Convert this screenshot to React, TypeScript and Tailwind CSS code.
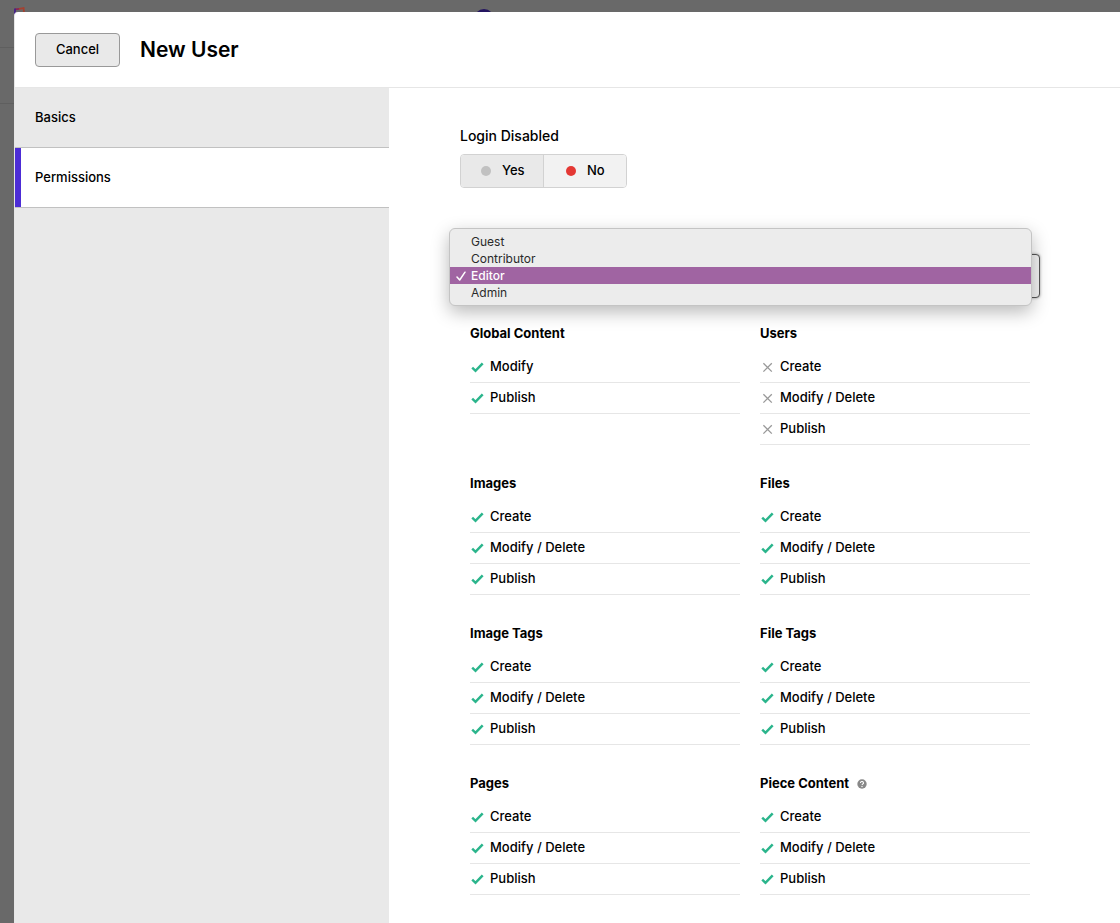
import React from 'react'

interface Permission {
  label: string
  allowed: boolean
}

interface PermissionGroup {
  title: string
  hasHelp?: boolean
  permissions: Permission[]
}

const fullAccess: Permission[] = [
  { label: 'Create', allowed: true },
  { label: 'Modify / Delete', allowed: true },
  { label: 'Publish', allowed: true }
]

const noAccess: Permission[] = fullAccess.map((p) => ({ ...p, allowed: false }))

const groups: PermissionGroup[] = [
  {
    title: 'Global Content',
    permissions: [
      { label: 'Modify', allowed: true },
      { label: 'Publish', allowed: true }
    ]
  },
  { title: 'Users', permissions: noAccess },
  { title: 'Images', permissions: fullAccess },
  { title: 'Files', permissions: fullAccess },
  { title: 'Image Tags', permissions: fullAccess },
  { title: 'File Tags', permissions: fullAccess },
  { title: 'Pages', permissions: fullAccess },
  { title: 'Piece Content', hasHelp: true, permissions: fullAccess }
]

const roles = ['Guest', 'Contributor', 'Editor', 'Admin']

const AllowedIcon = () => (
  <svg viewBox="0 0 15 15" className="h-[15px] w-[15px] shrink-0" fill="none" aria-hidden="true">
    <path d="M2.2 7.7 5.5 10.8 12.7 3.4" stroke="#2bb58c" strokeWidth="2.5" />
  </svg>
)

const DeniedIcon = () => (
  <svg viewBox="0 0 15 15" className="h-[15px] w-[15px] shrink-0" fill="none" aria-hidden="true">
    <path d="M3.4 3.2 11.8 11.6M11.8 3.2 3.4 11.6" stroke="#999" strokeWidth="1.3" />
  </svg>
)

const HelpIcon = () => (
  <svg viewBox="0 0 10 10" className="h-[10px] w-[10px]" fill="none" aria-hidden="true">
    <circle cx="5" cy="5" r="4.7" fill="#888" />
    <path d="M3.5 4a1.5 1.4 0 1 1 2.2 1.1c-.5.3-.7.5-.7.9" stroke="#fff" strokeWidth="1.1" />
    <circle cx="5" cy="7.5" r=".7" fill="#fff" />
  </svg>
)

// Admin bar and page that stay visible behind the modal
const Backdrop = () => (
  <div className="absolute inset-0 overflow-hidden bg-[#696969]" aria-hidden="true">
    <div className="flex h-12 border-b border-[#5f5f5f] pl-3">
      <svg viewBox="0 0 16 16" className="mt-1.5 h-4 w-4" fill="none">
        <path d="M12.4 12 11.6 2.1 7 2.8" stroke="#a5402f" strokeWidth="1.8" />
        <path d="M7 2.8 3 3.4" stroke="#8a2352" strokeWidth="1.8" />
        <path d="M3 2.6V14" stroke="#45208a" strokeWidth="1.8" />
      </svg>
      <span className="mt-[9px] ml-[446px] h-5 w-5 rounded-full bg-[#241560]" />
    </div>
    <div className="h-14 border-b border-[#5f5f5f]" />
  </div>
)

interface SidebarTabProps {
  label: string
  active?: boolean
}

const SidebarTab: React.FC<SidebarTabProps> = ({ label, active }) => (
  <button
    type="button"
    role="tab"
    aria-selected={!!active}
    className={`relative h-15 w-full border-b border-[#c1c1c1] pl-5 text-left text-[13px] font-medium ${
      active ? 'bg-white' : ''
    }`}
  >
    {active && <span className="absolute inset-y-0 left-0 w-1.5 bg-[#4c2cd6]" />}
    {label}
  </button>
)

const LoginToggle = () => (
  <fieldset>
    <legend className="text-sm leading-5 font-medium">Login Disabled</legend>
    <div className="mt-2 inline-flex h-[34px] overflow-hidden rounded border border-[#d2d2d2] text-[13px] font-medium">
      <label className="flex w-[83px] items-center gap-[11px] border-r border-[#d2d2d2] bg-[#e9e9e9] pl-5">
        <input
          type="radio"
          name="disabled"
          value="yes"
          className="h-2.5 w-2.5 appearance-none rounded-full bg-[#c1c1c1] checked:bg-green-500"
        />
        Yes
      </label>
      <label className="flex w-[82px] items-center gap-[11px] bg-[#f2f2f2] pl-[22px]">
        <input
          type="radio"
          name="disabled"
          value="no"
          defaultChecked
          className="h-2.5 w-2.5 appearance-none rounded-full bg-[#c1c1c1] checked:bg-[#e43834]"
        />
        No
      </label>
    </div>
  </fieldset>
)

const RoleSelect = () => (
  <div className="relative mt-[66px]">
    <select
      aria-label="Role"
      defaultValue="Editor"
      className="block h-11 w-full appearance-none rounded border border-[#555] bg-[#f2f2f2] px-5 text-[13px] shadow-[0_0_3px_rgba(0,0,0,0.4)]"
    >
      {roles.map((role) => (
        <option key={role}>{role}</option>
      ))}
    </select>
    <ul
      role="listbox"
      aria-label="Role options"
      className="absolute -top-[26px] right-2 -left-[11px] rounded-md border border-[#c4c4c4] bg-[#ececec] py-1 text-xs leading-[17px] text-[#2a2a2a] shadow-[0_6px_18px_rgba(0,0,0,0.28)]"
    >
      {roles.map((role) => {
        const selected = role === 'Editor'
        return (
          <li
            key={role}
            role="option"
            aria-selected={selected}
            className={`flex h-[17px] items-center ${selected ? 'bg-[#a064a2] font-medium text-white' : ''}`}
          >
            <span className="flex w-[21px] justify-center">
              {selected && (
                <svg viewBox="0 0 10 10" className="h-2.5 w-2.5" fill="none" aria-hidden="true">
                  <path d="M1 6 3.7 9 9 1.2" stroke="#fff" strokeWidth="1.5" strokeLinecap="round" strokeLinejoin="round" />
                </svg>
              )}
            </span>
            {role}
          </li>
        )
      })}
    </ul>
  </div>
)

const PermissionCard: React.FC<{ group: PermissionGroup }> = ({ group }) => (
  <section>
    <h2 className="flex h-5 items-center gap-2 text-[13px] font-bold">
      {group.title}
      {group.hasHelp && (
        <button type="button" aria-label="Help">
          <HelpIcon />
        </button>
      )}
    </h2>
    <ul className="mt-2">
      {group.permissions.map((permission) => (
        <li
          key={permission.label}
          className="flex h-[31px] items-center gap-[5px] border-b border-[#e6e6e6] text-[13px] font-medium"
        >
          {permission.allowed ? <AllowedIcon /> : <DeniedIcon />}
          {permission.label}
        </li>
      ))}
    </ul>
  </section>
)

const App = () => (
  <div className="relative flex min-h-screen pt-3 pl-3.5 font-['Inter',sans-serif] text-black">
    <Backdrop />
    <div
      role="dialog"
      aria-label="New User"
      className="relative flex flex-1 flex-col rounded-tl border-l border-[#e6e6e6] bg-white"
    >
      <header className="flex h-19 items-center gap-5 border-b border-[#e6e6e6] px-5">
        <button
          type="button"
          className="h-[34px] w-[85px] rounded border border-[#999] bg-[#e9e9e9] text-[13px] font-medium"
        >
          Cancel
        </button>
        <h1 className="text-[21px] font-semibold">New User</h1>
      </header>
      <div className="flex flex-1">
        <nav className="w-[374px] shrink-0 bg-[#e9e9e9]" role="tablist" aria-label="Sections">
          <SidebarTab label="Basics" />
          <SidebarTab label="Permissions" active />
        </nav>
        <main className="flex-1 pt-[38px] pr-5 pl-[71px]">
          <div className="max-w-[580px]">
            <LoginToggle />
            <RoleSelect />
            <div className="mt-[26px] grid grid-cols-2 gap-x-5 gap-y-[29px] px-2.5 pb-7">
              {groups.map((group) => (
                <PermissionCard key={group.title} group={group} />
              ))}
            </div>
          </div>
        </main>
      </div>
    </div>
  </div>
)

export default App
